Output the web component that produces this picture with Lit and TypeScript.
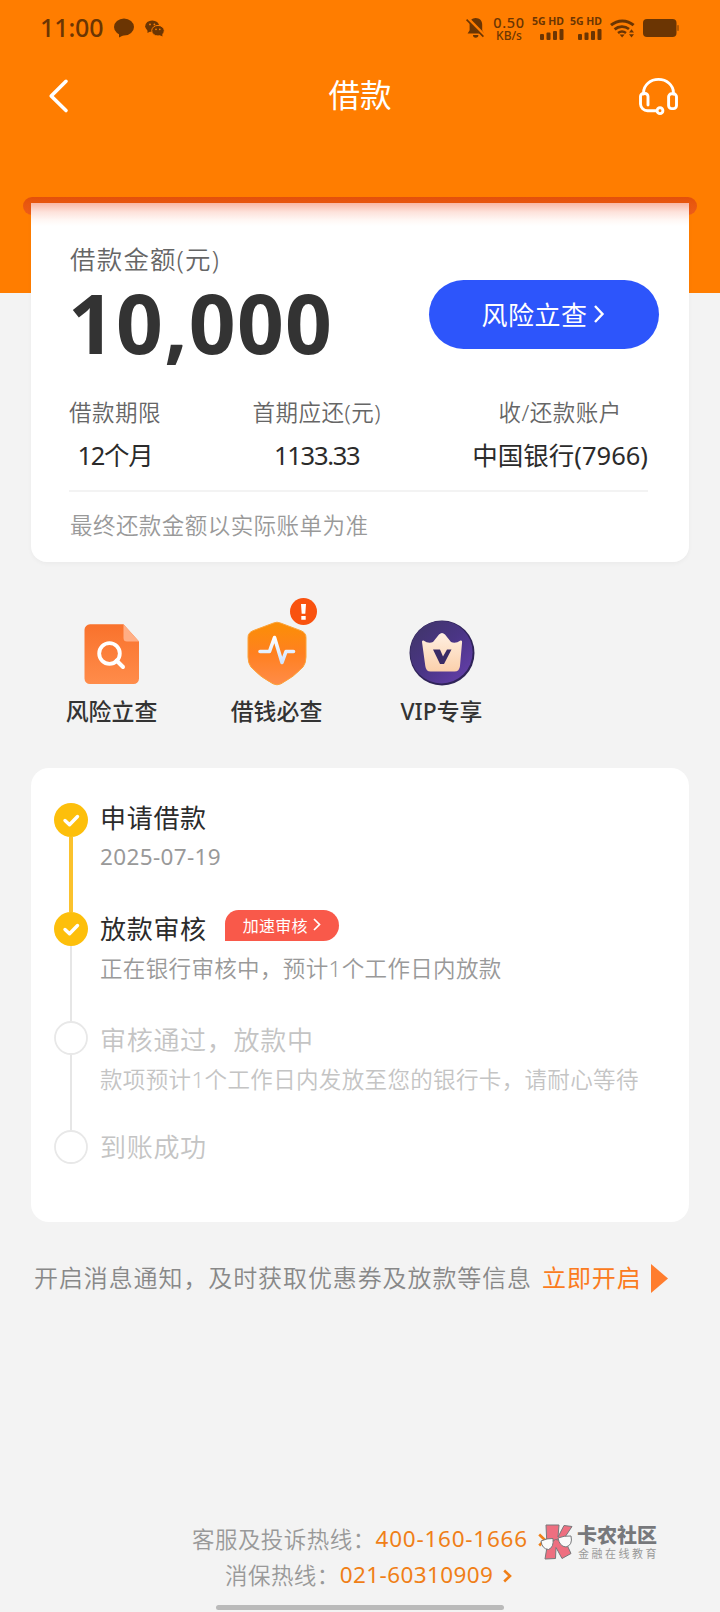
import { LitElement, html, css, svg, nothing } from "lit";
import { customElement, property } from "lit/decorators.js";
import { classMap } from "lit/directives/class-map.js";

const shared = css`
  * {
    box-sizing: border-box;
  }
  svg {
    display: block;
    flex: none;
    overflow: visible;
  }
`;

@customElement("status-bar")
class StatusBar extends LitElement {
  static styles = [
    shared,
    css`
      :host {
        display: flex;
        height: 56px;
        padding: 0 41px 0 40px;
        align-items: center;
        color: #6b3503;
      }
      .time {
        font-size: 25px;
        font-weight: 500;
        letter-spacing: -0.1px;
        line-height: 30px;
        width: 74px;
        margin-top: -2px;
      }
      .chat {
        margin-right: 11px;
      }
      .right {
        margin-left: auto;
        display: flex;
        align-items: center;
      }
      .speed {
        display: grid;
        justify-items: center;
        margin-left: 7px;
        width: 34px;
        font-weight: 500;
      }
      .rate {
        font-size: 14.5px;
        line-height: 14px;
        letter-spacing: 0.7px;
      }
      .unit {
        font-size: 12px;
        line-height: 13px;
      }
      .sim {
        display: grid;
        justify-items: end;
        width: 33px;
        margin-left: 5px;
        gap: 1px;
      }
      .net {
        font-size: 10.5px;
        font-weight: 700;
        line-height: 12px;
        white-space: nowrap;
        margin-top: -2px;
      }
      .wifi {
        margin-left: 8px;
      }
      .battery {
        margin-left: 8px;
      }
    `,
  ];

  private sim() {
    return html`<div class="sim">
      <span class="net">5G HD</span>
      <svg width="24" height="12" viewBox="0 0 24 12" fill="currentColor">
        <rect x="0" y="6" width="4" height="6" rx="1" />
        <rect x="6.500" y="4.500" width="4" height="7.500" rx="1" />
        <rect x="13" y="3" width="4" height="9" rx="1" />
        <rect x="19.500" y="1" width="4" height="11" rx="1" />
      </svg>
    </div>`;
  }

  render() {
    return html`
      <span class="time">11:00</span>
      <svg class="chat" width="20" height="20" viewBox="0 0 20 20" fill="currentColor">
        <ellipse cx="10" cy="9" rx="10" ry="8.6" />
        <path d="M5 14v5.4l6-3z" />
      </svg>
      <svg width="19" height="17" viewBox="0 0 19 17">
        <ellipse cx="7.2" cy="6.2" rx="7" ry="5.8" fill="currentColor" />
        <path d="M2.5 9.5v3.6l3.5-2z" fill="currentColor" />
        <ellipse cx="13" cy="10.7" rx="6.3" ry="5.3" fill="currentColor" stroke="#ff7d00" stroke-width="1" />
        <path d="M14.5 15l3 1.6-.4-3z" fill="currentColor" />
        <g fill="#ff7d00">
          <circle cx="5" cy="4.4" r=".9" /><circle cx="9.4" cy="4.4" r=".9" />
          <circle cx="11" cy="9.4" r=".8" /><circle cx="14.8" cy="9.4" r=".8" />
        </g>
      </svg>
      <div class="right">
        <svg width="19" height="20" viewBox="0 0 19 20">
          <path d="M9.6 0c4 0 6.6 2.800 6.600 6.600v5.600l2 3.400H1.600l2-3.400V6.600C3.600 2.800 6 0 9.600 0z M7 17h5.400a2.700 2.700 0 0 1-5.400 0z" fill="currentColor" />
          <path d="M1.600 .5l16.600 17" stroke="#ff7d00" stroke-width="3.600" />
          <path d="M.6 1.600l16.800 17" stroke="currentColor" stroke-width="1.600" />
        </svg>
        <div class="speed"><span class="rate">0.50</span><span class="unit">KB/s</span></div>
        ${this.sim()} ${this.sim()}
        <svg class="wifi" width="25" height="19" viewBox="0 0 25 19" fill="none" stroke="currentColor">
          <path d="M1 6.200a17 17 0 0 1 22.600 0" stroke-width="3" />
          <path d="M4.600 10.400a11.500 11.500 0 0 1 14.400-.4" stroke-width="2.800" />
          <path d="M8 14a6.800 6.800 0 0 1 8 0" stroke-width="2.600" />
          <path d="M9.600 15.600h5L12.100 18.600z" fill="currentColor" stroke="none" />
          <path d="M19 13.400h5l-2.500-3.200z M19 15.200h5l-2.500 3.200z" fill="currentColor" stroke="none" />
        </svg>
        <svg class="battery" width="36" height="18" viewBox="0 0 36 18" fill="currentColor">
          <rect width="33.500" height="18" rx="4" />
          <rect x="34.200" y="6" width="1.600" height="6" rx=".8" opacity=".6" />
        </svg>
      </div>
    `;
  }
}

@customElement("nav-bar")
class NavBar extends LitElement {
  static styles = [
    shared,
    css`
      :host {
        display: grid;
        grid-template-columns: 1fr auto 1fr;
        align-items: center;
        height: 80px;
        padding: 0 42px 0 48px;
        color: #fff;
      }
      .title {
        font-size: 31.5px;
        line-height: 40px;
        margin: -2px 6px 0 0;
      }
      .headset {
        justify-self: end;
      }
    `,
  ];
  render() {
    return html`
      <svg width="20" height="34" viewBox="0 0 20 34" fill="none" stroke="currentColor" stroke-width="3.600" stroke-linecap="round" stroke-linejoin="round">
        <path d="M18 2.300L3.200 17 18 31.500" />
      </svg>
      <span class="title">借款</span>
      <svg class="headset" width="39" height="37" viewBox="0 0 39 37" fill="none" stroke="currentColor" stroke-width="2.900" stroke-linecap="round">
        <path d="M4.600 16v-1.500a14.900 13.100 0 0 1 29.800 0V16" />
        <path d="M9 27V18.500a3 3 0 0 0-3-3H4.500a3 3 0 0 0-3 3v7.500a7 7 0 0 0 7 6.800h8.500" />
        <rect x="29.600" y="15.800" width="7.900" height="14.800" rx="3" />
        <circle cx="21" cy="32.700" r="2.900" />
      </svg>
    `;
  }
}

@customElement("loan-card")
class LoanCard extends LitElement {
  static styles = [
    shared,
    css`
      :host {
        display: block;
        padding: 0 23px;
        background: linear-gradient(#ff7d00, #ff7d00) top / 100% 96px no-repeat;
      }
      .slot-line {
        height: 18px;
        border-radius: 9px;
        background: linear-gradient(#e4500b, #e8580f 40%, #ee5c1a);
      }
      .card {
        margin: -12px 8px 0;
        height: 359px;
        padding: 0 41px 0 39px;
        border-radius: 0 0 16px 16px;
        background: linear-gradient(#f9b7a5, #fde2db 9px, #fff7f4 17px, #fff 23px);
        box-shadow: 0 2px 4px rgba(0, 0, 0, 0.035);
      }
      .top {
        display: flex;
        justify-content: space-between;
        height: 194px;
        padding-top: 40px;
      }
      .label {
        font-size: 25.5px;
        letter-spacing: 1.2px;
        line-height: 32px;
        color: #666;
        font-weight: 350;
      }
      .amount {
        font-size: 82px;
        line-height: 80px;
        font-weight: 700;
        letter-spacing: 1.2px;
        color: #333;
        margin: 7px 0 0 -2px;
      }
      .check {
        display: flex;
        align-items: center;
        justify-content: center;
        gap: 6px;
        width: 230px;
        height: 69px;
        margin: 37px -11px 0 0;
        padding: 0 3px 2px 0;
        border-radius: 35px;
        background: #2d55fb;
        color: #fff;
        font-size: 26px;
        letter-spacing: 0.5px;
      }
      .facts {
        display: flex;
        justify-content: space-between;
        height: 95px;
        border-bottom: 2px solid #f3f3f3;
        margin-left: -1px;
      }
      .fact {
        display: grid;
        justify-items: center;
        align-content: start;
        row-gap: 8px;
        white-space: nowrap;
        margin-top: -1px;
      }
      .name {
        font-size: 22.500px;
        line-height: 34px;
        letter-spacing: 0.5px;
        color: #666;
        font-weight: 350;
      }
      .value {
        font-size: 25.500px;
        line-height: 34px;
        color: #2b2b2b;
      }
      .value.tight {
        letter-spacing: -1.3px;
      }
      .note {
        font-size: 22.500px;
        letter-spacing: 0.450px;
        line-height: 68px;
        color: #999;
        font-weight: 350;
      }
    `,
  ];
  private facts = [
    { name: "借款期限", value: "12个月", tight: true },
    { name: "首期应还(元)", value: "1133.33", tight: true },
    { name: "收/还款账户", value: "中国银行(7966)", tight: false },
  ];
  render() {
    return html`
      <div class="slot-line"></div>
      <section class="card">
        <div class="top">
          <div>
            <div class="label">借款金额(元)</div>
            <div class="amount">10,000</div>
          </div>
          <div class="check">
            风险立查
            <svg width="10" height="18" viewBox="0 0 10 18" fill="none" stroke="currentColor" stroke-width="2.400"><path d="M1 1l7.500 8L1 17" /></svg>
          </div>
        </div>
        <div class="facts">
          ${this.facts.map(
            (f) => html`<div class="fact">
              <span class="name">${f.name}</span>
              <span class=${classMap({ value: true, tight: f.tight })}>${f.value}</span>
            </div>`
          )}
        </div>
        <div class="note">最终还款金额以实际账单为准</div>
      </section>
    `;
  }
}

const docIcon = html`<svg width="66" height="66" viewBox="0 0 66 66">
  <defs>
    <linearGradient id="d" x1="0" y1="0" x2="0" y2="1"><stop stop-color="#f9722c" /><stop offset="1" stop-color="#ff8c4a" /></linearGradient>
  </defs>
  <path d="M11 4.300h33.500L60 21.500V58.500a5.500 5.500 0 0 1-5.500 5.500H11A5.500 5.500 0 0 1 5.500 58.500V9.800A5.500 5.500 0 0 1 11 4.300z" fill="url(#d)" />
  <path d="M44.500 4.300L60 21.500H48a3.500 3.500 0 0 1-3.500-3.500z" fill="#ffae85" />
  <circle cx="30.500" cy="33.500" r="10.300" fill="none" stroke="#fff" stroke-width="3.800" />
  <path d="M37.500 40.500l6.500 6.500" stroke="#fff" stroke-width="4" stroke-linecap="round" />
</svg>`;

const shieldIcon = html`<svg width="66" height="66" viewBox="0 0 66 66">
  <defs>
    <linearGradient id="s" x1="0" y1="0" x2="0" y2="1"><stop stop-color="#fb8f05" /><stop offset=".5" stop-color="#ff8020" /><stop offset="1" stop-color="#ff8c48" /></linearGradient>
    <linearGradient id="p" x1="0" y1="0" x2="0" y2="1"><stop stop-color="#fff" /><stop offset="1" stop-color="#cfe4ff" /></linearGradient>
  </defs>
  <path d="M29.500 3q3.500-1.600 7 0l20.500 7.700q5 2 5 6.800V37q0 6-3 10Q50 57 37 63.800q-4 2-8 0Q16 57 7 47 4 43 4 37V17.500q0-4.800 5-6.800z" fill="url(#s)" stroke="#fca33a" stroke-width="1" />
  <path d="M16 31.500h9.500l5-14 7.500 25 4-11h7.500" fill="none" stroke="url(#p)" stroke-width="3.600" stroke-linecap="round" stroke-linejoin="round" />
</svg>`;

const vipIcon = html`<svg width="66" height="66" viewBox="0 0 66 66">
  <defs>
    <linearGradient id="v" x1="0" y1="0" x2="1" y2="1"><stop stop-color="#3f3566" /><stop offset=".5" stop-color="#4a3585" /><stop offset="1" stop-color="#6940b0" /></linearGradient>
    <linearGradient id="c" x1="0" y1="0" x2="0" y2="1"><stop stop-color="#fff0e2" /><stop offset="1" stop-color="#fbd0ab" /></linearGradient>
  </defs>
  <circle cx="33" cy="33" r="32.500" fill="#2f2358" />
  <circle cx="32.400" cy="32.200" r="31.200" fill="url(#v)" />
  <path d="M14.500 20.500q5 3.500 9.500 1.500l6-7.500q3-3 6 0l6 7.500q4.500 2 9.500-1.500 1.800-.5 1.600 1.500L51 46q-.6 5.500-5.500 5.500h-24Q17 51.500 16.300 46L13 22q-.2-2 1.500-1.500z" fill="url(#c)" />
  <path d="M24 29.500h7l3 7 4-7h4.500l-7.500 14.500h-4z" fill="#3a2c66" />
</svg>`;

@customElement("quick-links")
class QuickLinks extends LitElement {
  static styles = [
    shared,
    css`
      :host {
        display: grid;
        grid-template-columns: repeat(3, 165px);
        padding: 58px 29px 0;
        height: 206px;
      }
      .item {
        display: grid;
        justify-items: center;
        align-content: start;
        gap: 9px;
      }
      .icon {
        position: relative;
      }
      .badge {
        position: absolute;
        right: -7px;
        top: -22px;
      }
      .text {
        font-size: 22.900px;
        line-height: 34px;
        font-weight: 500;
        color: #333;
      }
    `,
  ];
  private items = [
    { icon: docIcon, text: "风险立查", alert: false },
    { icon: shieldIcon, text: "借钱必查", alert: true },
    { icon: vipIcon, text: "VIP专享", alert: false },
  ];
  render() {
    return this.items.map(
      (i) => html`<div class="item">
        <div class="icon">
          ${i.icon}
          ${i.alert
            ? html`<svg class="badge" width="27" height="27" viewBox="0 0 27 27">
                <circle cx="13.500" cy="13.500" r="13.500" fill="#f9520f" />
                <path d="M11 6h5l-.7 9.800h-3.600z M11.300 18h4.400v3.800h-4.400z" fill="#fff" />
              </svg>`
            : nothing}
        </div>
        <span class="text">${i.text}</span>
      </div>`
    );
  }
}

@customElement("progress-step")
class ProgressStep extends LitElement {
  @property() heading = "";
  @property() detail = "";
  @property() action = "";
  @property({ type: Boolean }) done = false;
  @property() line = "";

  static styles = [
    shared,
    css`
      :host {
        display: flex;
        gap: 13px;
        height: 109px;
      }
      .rail {
        display: flex;
        flex-direction: column;
        align-items: center;
        width: 34px;
      }
      .line {
        flex: 1;
        width: 1.500px;
        background: #e6e6e6;
      }
      .line.gold {
        width: 4px;
        background: #fbc22d;
      }
      .line.none {
        display: none;
      }
      .body {
        white-space: nowrap;
        color: #c4c4c4;
        font-weight: 350;
        margin-left: -1px;
        margin-top: -1px;
      }
      .body.first {
        margin-top: -3px;
      }
      .body.waiting {
        margin-top: 1px;
      }
      .head {
        display: flex;
        align-items: center;
        height: 34px;
        font-size: 26px;
        letter-spacing: 0.700px;
      }
      .detail {
        font-size: 22.500px;
        letter-spacing: 0.350px;
        line-height: 34px;
        margin-top: 7px;
      }
      .first .detail {
        margin-top: 6px;
        font-weight: 400;
      }
      .done .head {
        color: #2b2b2b;
        font-weight: 400;
      }
      .done .detail {
        color: #999;
      }
      .action {
        display: flex;
        align-items: center;
        justify-content: center;
        gap: 5px;
        width: 114px;
        height: 31px;
        margin: -5px 0 0 18px;
        padding-bottom: 2px;
        border-radius: 14px 16px 16px 0;
        background: #f9594a;
        color: #fff;
        font-size: 16px;
        letter-spacing: 0.300px;
      }
    `,
  ];
  render() {
    const mark = this.done
      ? svg`<circle cx="17" cy="17" r="17" fill="#fdbf0b" /><path d="M11 17.500l4.500 4.300 8-8.300" fill="none" stroke="#fff" stroke-width="3.400" stroke-linecap="round" stroke-linejoin="round" />`
      : svg`<circle cx="17" cy="17" r="16" fill="#fff" stroke="#e8e8e8" stroke-width="1.800" />`;
    const bodyClass = {
      body: true,
      done: this.done,
      first: this.line === "gold",
      waiting: !this.done && this.detail !== "",
    };
    return html`
      <div class="rail">
        <svg width="34" height="34" viewBox="0 0 34 34">${mark}</svg>
        <div class=${classMap({ line: true, gold: this.line === "gold", none: this.line === "none" })}></div>
      </div>
      <div class=${classMap(bodyClass)}>
        <div class="head">
          ${this.heading}
          ${this.action
            ? html`<span class="action">${this.action}<svg width="8" height="13" viewBox="0 0 8 13" fill="none" stroke="currentColor" stroke-width="1.700"><path d="M1 1l5.500 5.500L1 12" /></svg></span>`
            : nothing}
        </div>
        ${this.detail ? html`<div class="detail">${this.detail}</div>` : nothing}
      </div>
    `;
  }
}

@customElement("page-footer")
class PageFooter extends LitElement {
  static styles = [
    shared,
    css`
      :host {
        display: block;
        position: relative;
        margin-top: auto;
        height: 92px;
        white-space: nowrap;
      }
      .row {
        display: flex;
        align-items: center;
        height: 36px;
        font-size: 22.500px;
        color: #999;
        font-weight: 350;
        letter-spacing: 0.450px;
      }
      .first {
        padding-left: 192px;
      }
      .second {
        padding-left: 225px;
      }
      .phone {
        color: #f07f17;
        font-weight: 400;
        letter-spacing: 0.400px;
      }
      .first .phone {
        letter-spacing: 0.750px;
      }
      .arrow {
        margin: 3px 0 0 10px;
      }
      .home {
        width: 288px;
        height: 5px;
        margin: 13px auto 0;
        border-radius: 3px;
        background: #bababa;
      }
      .mark {
        position: absolute;
        left: 541px;
        top: 4px;
        display: flex;
        gap: 2px;
      }
      .brand {
        font-size: 20px;
        line-height: 22px;
        font-weight: 900;
        color: #77787b;
        margin-top: 1px;
      }
      .slogan {
        font-size: 11px;
        line-height: 14px;
        letter-spacing: 2.500px;
        margin-left: 1px;
        color: #999;
      }
    `,
  ];
  private arrow() {
    return html`<svg class="arrow" width="9" height="14" viewBox="0 0 9 14" fill="none" stroke="#f07f17" stroke-width="2.600"><path d="M1.200 1.500L7 7l-5.800 5.500" /></svg>`;
  }
  render() {
    return html`
      <div class="row first">客服及投诉热线：<span class="phone">400-160-1666</span>${this.arrow()}</div>
      <div class="row second">消保热线：<span class="phone">021-60310909</span>${this.arrow()}</div>
      <div class="home"></div>
      <div class="mark">
        <svg width="34" height="36" viewBox="0 0 34 36" stroke="#77787b" stroke-width="1">
          <path d="M5 1h13l-1 12 6-11.500 8 1-8 12 7 15-9 5-6-11-.5 11L4 35l2-12z" fill="#ee6f80" />
          <path d="M0 17q6-3 12-2.500 1 9-4.500 11Q1 25 0 17z" fill="#fafafa" />
          <path d="M17 14q6-2.500 13-2 2 9-5 11-6.500-.5-8-9z" fill="#fafafa" />
          <path d="M12 17q2.500-2.500 5-1" fill="none" />
        </svg>
        <div>
          <div class="brand">卡农社区</div>
          <div class="slogan">金融在线教育</div>
        </div>
      </div>
    `;
  }
}

@customElement("app-root")
class AppRoot extends LitElement {
  static styles = [
    shared,
    css`
      :host {
        display: flex;
        flex-direction: column;
        width: 720px;
        height: 1612px;
        overflow: hidden;
        background: #f3f3f3;
        font-family: "Noto Sans", "Noto Sans CJK SC", sans-serif;
      }
      .header {
        height: 197px;
        background: #ff7d00;
      }
      .timeline {
        margin: 0 31px;
        height: 454px;
        padding: 35px 23px 0;
        border-radius: 18px;
        background: #fff;
      }
      .notice {
        display: flex;
        align-items: center;
        height: 40px;
        margin: 36px 0 0 34px;
        font-size: 24px;
        letter-spacing: 0.900px;
        color: #888;
        font-weight: 350;
        white-space: nowrap;
      }
      .words {
        margin-top: -4px;
      }
      .enable {
        color: #fb7b20;
        font-weight: 400;
        margin: 0 9px 0 10px;
      }
    `,
  ];
  render() {
    return html`
      <div class="header">
        <status-bar></status-bar>
        <nav-bar></nav-bar>
      </div>
      <loan-card></loan-card>
      <quick-links></quick-links>
      <section class="timeline">
        <progress-step done line="gold" heading="申请借款" detail="2025-07-19"></progress-step>
        <progress-step done heading="放款审核" action="加速审核" detail="正在银行审核中，预计1个工作日内放款"></progress-step>
        <progress-step heading="审核通过，放款中" detail="款项预计1个工作日内发放至您的银行卡，请耐心等待"></progress-step>
        <progress-step line="none" heading="到账成功"></progress-step>
      </section>
      <div class="notice">
        <div class="words">开启消息通知，及时获取优惠券及放款等信息<span class="enable">立即开启</span></div>
        <svg width="17" height="29" viewBox="0 0 17 29"><path d="M0 0l17 14.500L0 29z" fill="#ff7d2e" /></svg>
      </div>
      <page-footer></page-footer>
    `;
  }
}
